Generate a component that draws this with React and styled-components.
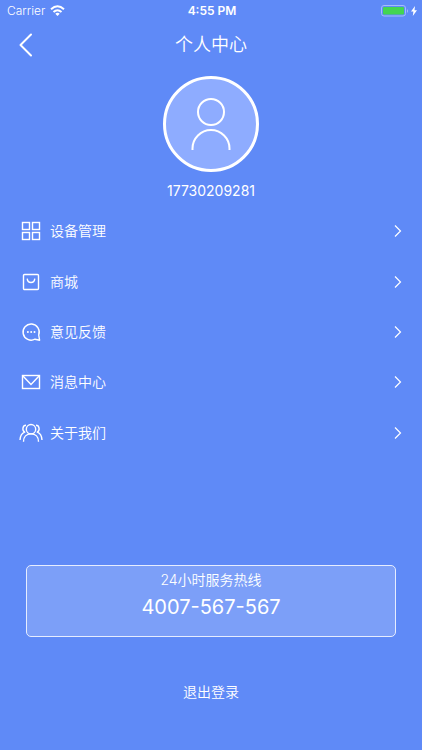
import React from "react";
import styled, { createGlobalStyle } from "styled-components";

const GlobalStyle = createGlobalStyle`
  * { box-sizing: border-box; }
  body {
    margin: 0;
    background: #5f8af7;
    color: #fff;
    font-family: Inter, "Noto Sans CJK SC", sans-serif;
    font-weight: 350;
  }
  button, a { font: inherit; color: inherit; text-decoration: none; }
  button { background: none; border: 0; padding: 0; cursor: pointer; }
`;

const Page = styled.div`
  min-height: 100vh;
  display: flex;
  flex-direction: column;
`;

const StatusBar = styled.div`
  display: grid;
  grid-template-columns: 1fr auto 1fr;
  align-items: center;
  height: 22px;
  padding: 0 5px 0 7px;
  font-size: 12px;
  line-height: 22px;
`;

const StatusGroup = styled.div`
  display: flex;
  align-items: center;
  gap: ${({ $gap }) => $gap}px;
  justify-content: ${({ $end }) => ($end ? "flex-end" : "flex-start")};
`;

const Clock = styled.time`
  font-weight: 600;
`;

const NavBar = styled.header`
  display: grid;
  grid-template-columns: 52px 1fr 52px;
  align-items: center;
  height: 44px;
`;

const BackButton = styled.button`
  display: flex;
  align-items: center;
  height: 44px;
  padding-left: 18px;
`;

const Title = styled.h1`
  margin: 0;
  text-align: center;
  font-size: 18px;
  line-height: 46px;
  font-weight: 350;
`;

const Profile = styled.section`
  display: flex;
  flex-direction: column;
  align-items: center;
  gap: 8px;
  padding-top: 10px;
`;

const Avatar = styled.div`
  display: flex;
  align-items: center;
  justify-content: center;
  width: 96px;
  height: 96px;
  border: 3px solid #fff;
  border-radius: 50%;
  background: #8eacff;
`;

const Phone = styled.div`
  font-size: 14px;
  line-height: 22px;
  font-weight: 400;
`;

const Menu = styled.nav`
  display: grid;
  grid-auto-rows: 1fr;
  min-height: 252px;
  margin-top: 4px;
`;

const MenuItem = styled.a`
  display: grid;
  grid-template-columns: 24px 1fr 8px;
  align-items: center;
  column-gap: 7px;
  padding: 0 20px 0 19px;
  font-size: 14px;
  line-height: 20px;
`;

const Footer = styled.footer`
  display: flex;
  flex-direction: column;
  align-items: center;
  gap: 32px;
  margin-top: auto;
  padding: 24px 26px 37px;
`;

const Hotline = styled.a`
  display: flex;
  flex-direction: column;
  align-items: center;
  gap: 1px;
  width: 100%;
  padding: 3px 0 14px;
  border: 1px solid #e6edff;
  border-radius: 5px;
  background: #7c9ff8;
`;

const HotlineLabel = styled.span`
  font-size: 14px;
  line-height: 22px;
`;

const HotlineNumber = styled.strong`
  font-size: 20px;
  line-height: 30px;
  font-weight: 400;
`;

const LogoutButton = styled.button`
  height: 44px;
  font-size: 14px;
`;

const Glyph = styled.svg`
  display: block;
  fill: none;
  stroke: #fff;
  stroke-linejoin: ${({ $sharp }) => ($sharp ? "miter" : "round")};
`;

function WifiIcon() {
  return (
    <Glyph width="15" height="12" viewBox="0 0 15 12" strokeWidth="2" aria-label="Wi-Fi">
      <path d="M1 4.2Q7.5-1.6 14 4.2" />
      <path d="M3.5 7Q7.5 3.4 11.5 7" />
      <path d="M5.3 8.7Q7.5 7 9.7 8.7L7.5 11Z" fill="#fff" stroke="none" />
    </Glyph>
  );
}

function BatteryIcon() {
  return (
    <Glyph width="28" height="12" viewBox="0 0 28 12" aria-label="Battery charging">
      <rect x="0.5" y="0.5" width="24" height="10.5" rx="2.5" stroke="#a5bdfb" />
      <rect x="2" y="2" width="21" height="7.5" rx="1" fill="#43d551" stroke="none" />
      <path d="M26 4v4q2-2 0-4Z" fill="#a5bdfb" stroke="none" />
    </Glyph>
  );
}

function BoltIcon() {
  return (
    <Glyph width="6" height="10" viewBox="0 0 6 10" aria-hidden="true">
      <path d="M4 0 0 5.6h2.4L1.8 10 6 4.2H3.5Z" fill="#fff" stroke="none" />
    </Glyph>
  );
}

function BackIcon() {
  return (
    <Glyph width="16" height="24" viewBox="0 0 16 24" strokeWidth="2" strokeLinecap="round" aria-hidden="true">
      <path d="M13 1.5 2.5 12 13 22.5" />
    </Glyph>
  );
}

function PersonIcon() {
  return (
    <Glyph width="42" height="54" viewBox="0 0 42 54" strokeWidth="2" aria-hidden="true">
      <circle cx="21" cy="15" r="13" />
      <path d="M2.5 53V51.5A18.5 18.5 0 0 1 39.5 51.5V53" />
    </Glyph>
  );
}

function ChevronIcon() {
  return (
    <Glyph $sharp width="8" height="14" viewBox="0 0 8 14" strokeWidth="1.2" aria-hidden="true">
      <path d="M1 1.5 6.5 7 1 12.5" />
    </Glyph>
  );
}

const shapes = {
  devices: (
    <>
      <rect x="3.5" y="3.5" width="7" height="7" />
      <rect x="13.5" y="3.5" width="7" height="7" />
      <rect x="3.5" y="13.5" width="7" height="7" />
      <rect x="13.5" y="13.5" width="7" height="7" />
    </>
  ),
  shop: (
    <>
      <rect x="4.5" y="4.5" width="15" height="15" rx="1" />
      <path d="M8.2 8.6c.6 5.2 7 5.2 7.6 0" />
    </>
  ),
  feedback: (
    <>
      <path d="M19.7 15A8.1 8.1 0 1 0 16 19.2L20.6 20.2Z" />
      <g fill="#fff" stroke="none">
        <circle cx="8.9" cy="12" r="1" />
        <circle cx="12.2" cy="12" r="1" />
        <circle cx="15.5" cy="12" r="1" />
      </g>
    </>
  ),
  messages: (
    <>
      <rect x="3.5" y="5.5" width="17" height="13" />
      <path d="M3.5 5.5 12 14.5l8.5-9" />
    </>
  ),
  about: (
    <>
      <circle cx="12" cy="8.2" r="4.7" />
      <path d="M4.5 20.8c0-4.8 2.9-7.9 7.5-7.9s7.5 3.1 7.5 7.9" />
      <path d="M7 4.2C3.5 4.2 2.8 9.4 5.7 11.2 2.7 12.4 1.2 15.2 1 19" />
      <path d="M17 4.2c3.5 0 4.2 5.2 1.3 7 3 1.2 4.5 4 4.7 7.8" />
    </>
  ),
};

const items = [
  { id: "devices", label: "设备管理" },
  { id: "shop", label: "商城" },
  { id: "feedback", label: "意见反馈" },
  { id: "messages", label: "消息中心" },
  { id: "about", label: "关于我们" },
];

export default function App() {
  return (
    <Page>
      <GlobalStyle />
      <StatusBar>
        <StatusGroup $gap={5}>
          <span>Carrier</span>
          <WifiIcon />
        </StatusGroup>
        <Clock>4:55 PM</Clock>
        <StatusGroup $gap={2} $end>
          <BatteryIcon />
          <BoltIcon />
        </StatusGroup>
      </StatusBar>
      <NavBar>
        <BackButton type="button" aria-label="返回">
          <BackIcon />
        </BackButton>
        <Title>个人中心</Title>
      </NavBar>
      <Profile>
        <Avatar>
          <PersonIcon />
        </Avatar>
        <Phone>17730209281</Phone>
      </Profile>
      <Menu>
        {items.map(({ id, label }) => (
          <MenuItem key={id} href={`#${id}`}>
            <Glyph width="24" height="24" viewBox="0 0 24 24" strokeWidth="1.4" $sharp={id === "devices" || id === "messages"} aria-hidden="true">
              {shapes[id]}
            </Glyph>
            <span>{label}</span>
            <ChevronIcon />
          </MenuItem>
        ))}
      </Menu>
      <Footer>
        <Hotline href="tel:4007567567">
          <HotlineLabel>24小时服务热线</HotlineLabel>
          <HotlineNumber>4007-567-567</HotlineNumber>
        </Hotline>
        <LogoutButton type="button">退出登录</LogoutButton>
      </Footer>
    </Page>
  );
}
